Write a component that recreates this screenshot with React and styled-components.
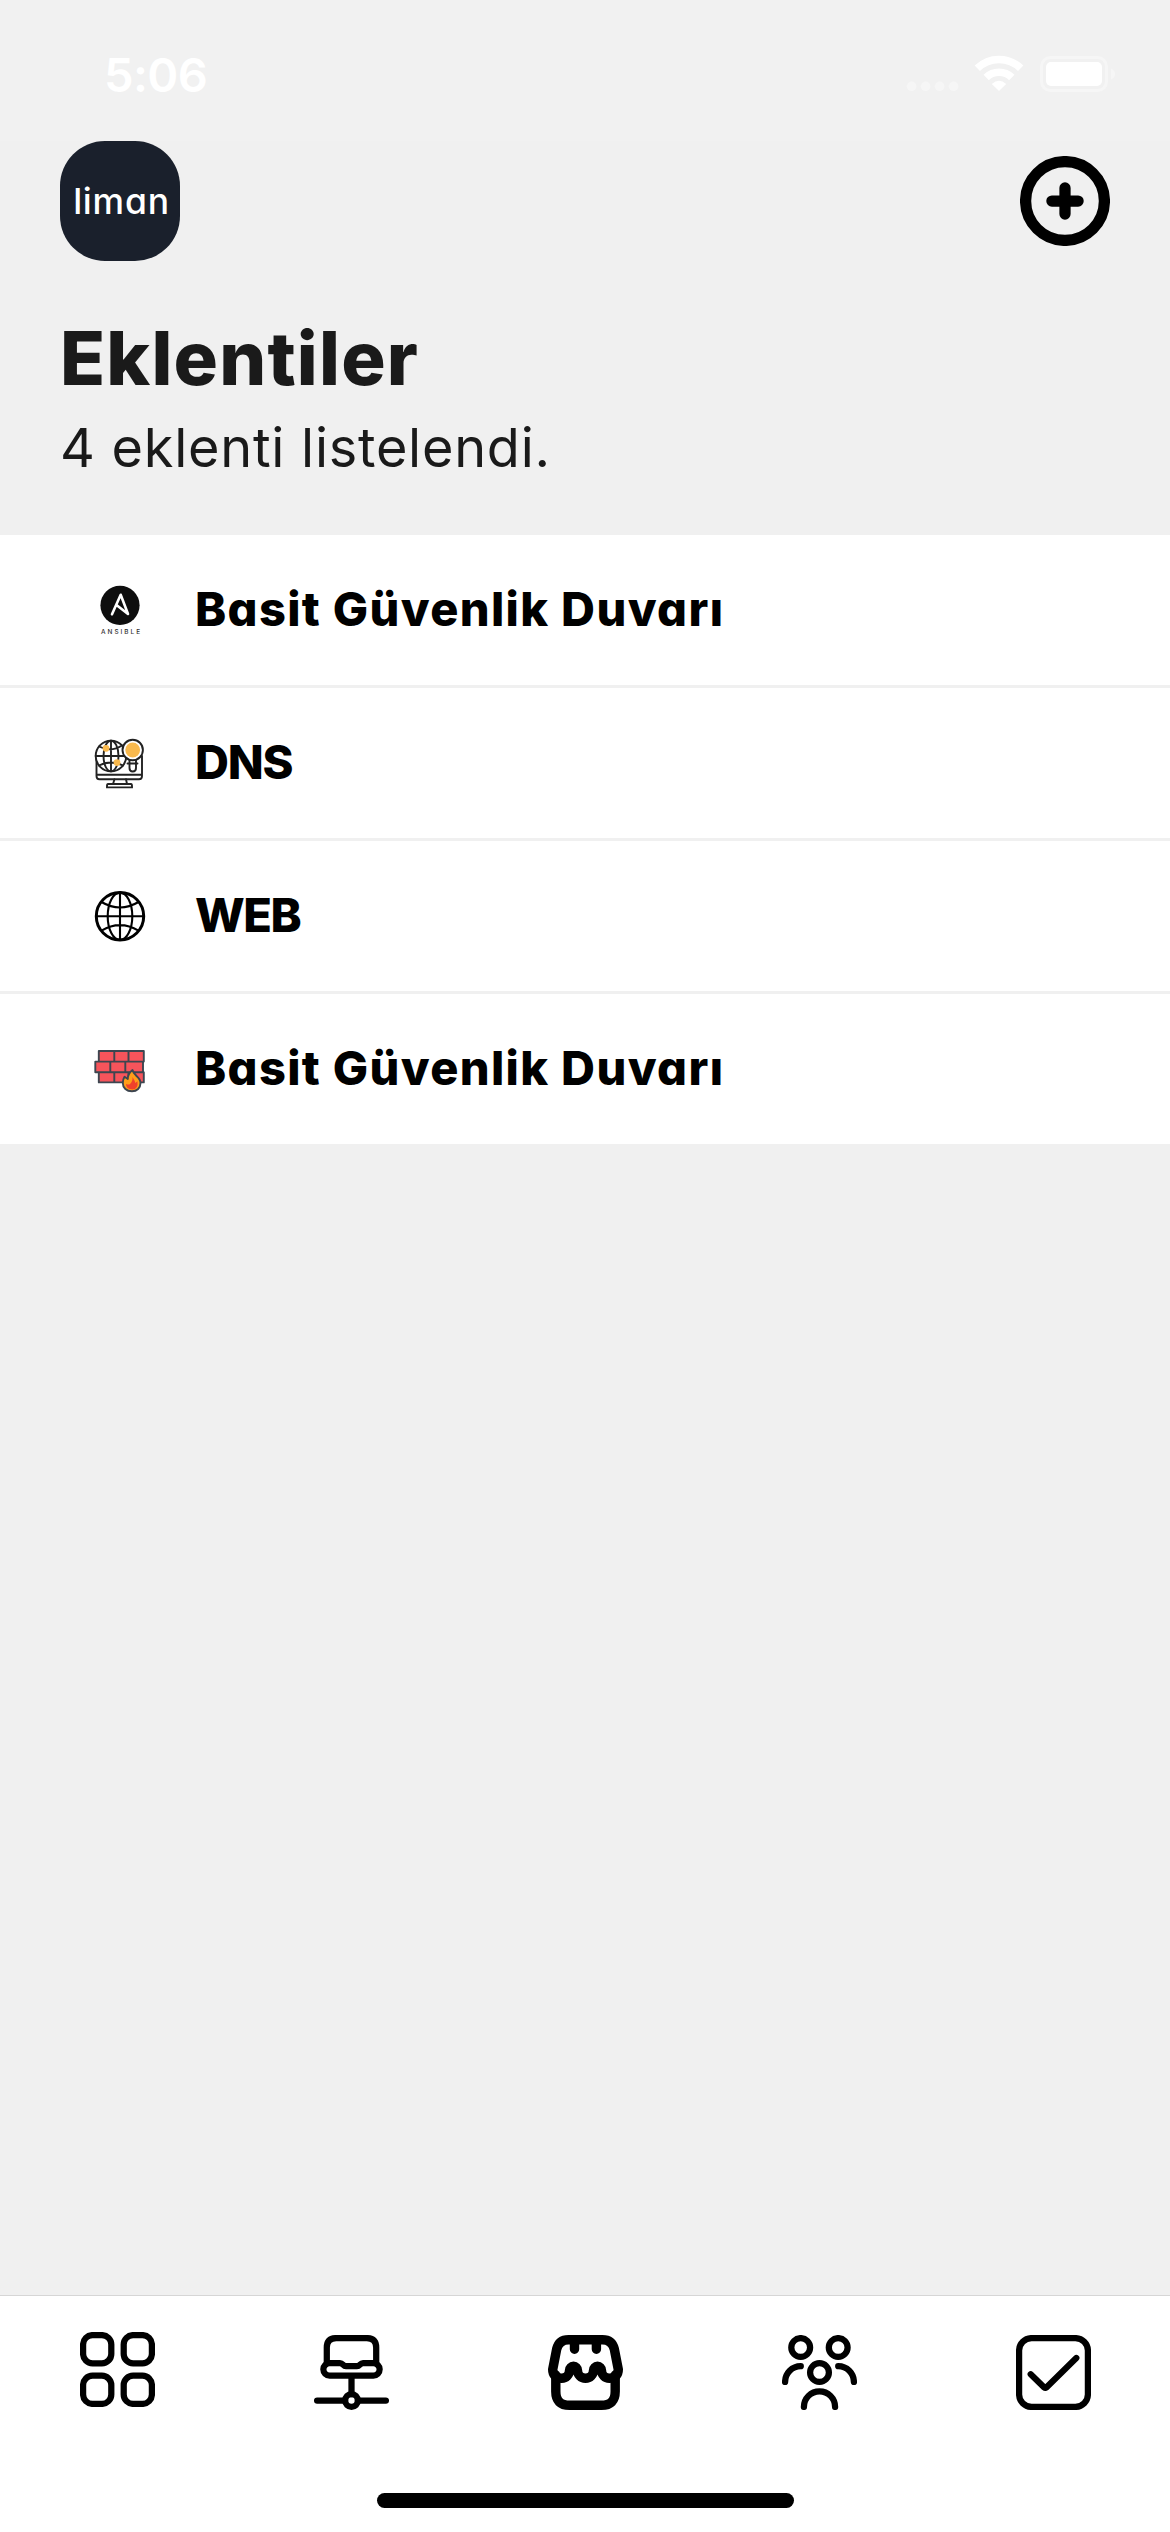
import React from "react";
import styled, { createGlobalStyle } from "styled-components";

const GlobalStyle = createGlobalStyle`
  * { box-sizing: border-box; }
  body { margin: 0; background: #f0f0f0; }
`;

const Screen = styled.div`
  display: flex;
  flex-direction: column;
  width: 1170px;
  height: 2532px;
  background: #f0f0f0;
  font-family: Inter, "Noto Sans", sans-serif;
  font-feature-settings: "cv11", "ss03";
  overflow: hidden;
`;

const StatusBar = styled.div`
  display: flex;
  justify-content: space-between;
  height: 141px;
  flex: none;
  padding: 45px 54px 0 104px;
  background: #f1f1f1;
  color: #fff;
`;

const Clock = styled.div`
  font-size: 47px;
  font-weight: 600;
  line-height: 59px;
  letter-spacing: -0.6px;
`;

const StatusIcons = styled.svg`
  width: 210px;
  height: 60px;
`;

const Header = styled.header`
  height: 394px;
  flex: none;
  padding: 0 60px;
`;

const TopRow = styled.div`
  display: flex;
  align-items: center;
  justify-content: space-between;
  height: 120px;
`;

const Logo = styled.div`
  display: flex;
  align-items: center;
  justify-content: center;
  width: 120px;
  height: 120px;
  padding-left: 3px;
  border-radius: 45px;
  background: #1a202c;
  color: #fff;
  font-size: 35.5px;
  font-weight: 550;
  letter-spacing: 0.8px;
`;

const AddButton = styled.button`
  display: flex;
  width: 90px;
  height: 90px;
  padding: 0;
  border: 0;
  background: none;
`;

const Title = styled.h1`
  margin: 49px 0 0;
  font-size: 74px;
  font-weight: 800;
  line-height: 96px;
  color: #1a1a1a;
  white-space: nowrap;
  letter-spacing: 1.2px;
`;

const Subtitle = styled.p`
  margin: 2px 0 0;
  font-size: 54px;
  font-weight: 400;
  line-height: 80px;
  color: #1a1a1a;
  white-space: nowrap;
  letter-spacing: 0.75px;
`;

const List = styled.ul`
  display: flex;
  flex-direction: column;
  gap: 3px;
  margin: 0;
  padding: 0;
  list-style: none;
`;

const Row = styled.li`
  display: flex;
  align-items: center;
  gap: 50px;
  height: 150px;
  padding: 0 95px;
  background: #fff;
`;

const RowIcon = styled.svg`
  width: 54px;
  height: 54px;
  margin: 0 -2px;
  flex: none;
`;

const RowName = styled.span`
  padding-bottom: 3px;
  font-size: 47px;
  font-weight: 800;
  line-height: 64px;
  color: #000;
  white-space: nowrap;
  letter-spacing: ${(p) => p.$spacing};
`;

const TabBar = styled.nav`
  display: flex;
  flex-direction: column;
  justify-content: space-between;
  align-items: center;
  height: 237px;
  margin-top: auto;
  padding: 39px 0 24px;
  border-top: 1px solid #d6d6d6;
  background: #fff;
`;

const Tabs = styled.div`
  display: flex;
  width: 100%;
`;

const Tab = styled.a`
  display: flex;
  flex: 1;
  justify-content: center;
  margin-top: ${(p) => (p.$raised ? "-3px" : "0")};
`;

const TabIcon = styled.svg`
  width: 75px;
  height: 75px;
  fill: none;
  stroke: #000;
  stroke-width: ${(p) => (p.$active ? 9.4 : 6.25)};
  stroke-linecap: round;
  stroke-linejoin: round;
`;

const HomeIndicator = styled.div`
  width: 417px;
  height: 15px;
  border-radius: 8px;
  background: #000;
`;

const AnsibleIcon = () => (
  <RowIcon viewBox="0 0 54 54">
    <circle cx="27" cy="22.3" r="19.6" fill="#0e0e0e" />
    <path d="M19 31.3 L27.7 11.8 L35 31 L23.8 22.3" fill="none" stroke="#fff" strokeWidth="2.6" strokeLinejoin="round" strokeLinecap="round" />
    <text x="8" y="50.6" textLength="39" fontFamily="Inter, sans-serif" fontSize="6.4" fontWeight="500" fill="#333">ANSIBLE</text>
  </RowIcon>
);

const DnsIcon = () => (
  <RowIcon viewBox="0 0 54 54" fill="none" stroke="#222" strokeWidth="1.9" strokeLinecap="round">
    <path d="M3.5 20 V40 Q3.5 43.3 6.5 43.3 H46 Q49 43.3 49 40 V20 M3.5 38.8 H49" />
    <path d="M21.5 43.3 L20 48 M33 43.3 L34 48 M15 48 H38 Q39 48 39 50 V51.4 H14 V50 Q14 48 15 48 M24 48 H30" />
    <circle cx="18" cy="20" r="15.3" fill="#fff" />
    <ellipse cx="18" cy="20" rx="7.5" ry="15.3" />
    <path d="M18 4.7 V35.3 M2.7 20 H33.3 M6 10.5 Q18 16.5 29 9.5 M6 29.5 Q18 23.5 30 29.5" />
    <g stroke="none" fill="#f9b94d">
      <circle cx="13" cy="12.3" r="3.4" />
      <circle cx="24" cy="26.6" r="3.4" />
    </g>
    <path d="M36.5 23 V32 Q36.5 35.5 39.7 35.5 Q43 35.5 43 32 V23 M34.5 27.5 H44.5" fill="#fff" />
    <circle cx="39.7" cy="14" r="10.2" fill="#fff" />
    <circle cx="39.7" cy="14" r="7.4" fill="#f9b94d" stroke="none" />
  </RowIcon>
);

const WebIcon = () => (
  <RowIcon viewBox="0 0 54 54" fill="none" stroke="#000" strokeWidth="2.1">
    <circle cx="27" cy="27.3" r="23.7" strokeWidth="3" />
    <ellipse cx="27" cy="27.3" rx="12.3" ry="23.7" />
    <path d="M27 3.5 V51 M3 27.3 H51 M8.5 13 Q27 24 45.5 13 M8.5 41.6 Q27 30.6 45.5 41.6" />
  </RowIcon>
);

const FirewallIcon = () => (
  <RowIcon viewBox="0 0 54 54" stroke="#3d4650" strokeWidth="1.9" strokeLinejoin="round">
    <path d="M5.8 9 H50.8 V19.6 H5.8 Z M2.3 19.6 H50 V30.3 H2.3 Z M5.8 30.3 H50.8 V40.4 H5.8 Z" fill="#f7545b" />
    <path d="M21.3 9 V19.6 M35.5 9 V19.6 M17.3 19.6 V30.3 M32.3 19.6 V30.3 M21.3 30.3 V40.4 M35.5 30.3 V40.4" fill="none" />
    <path d="M39.5 28 C40.5 34 47.5 34.5 47.5 41 C47.5 46 44 49.3 39 49.3 C33.5 49.3 29.8 46 29.8 41 Q29.8 37.5 31.5 34.8 L34.8 37 Q34.8 31.5 39.5 28 Z" fill="#ff9e19" />
    <path d="M39.5 35 Q42 39 42.3 41 L44.5 39.2 Q45.5 47.4 39.3 47.4 Q33 47.4 33 42 Q36 43 37 42 Q40 39 39.5 35 Z" fill="#f0422b" stroke="none" />
  </RowIcon>
);

const extensions = [
  { name: "Basit Güvenlik Duvarı", Icon: AnsibleIcon, spacing: "1.35px" },
  { name: "DNS", Icon: DnsIcon, spacing: "-1.2px" },
  { name: "WEB", Icon: WebIcon, spacing: "-1.4px" },
  { name: "Basit Güvenlik Duvarı", Icon: FirewallIcon, spacing: "1.35px" },
];

export default function App() {
  return (
    <>
      <GlobalStyle />
      <Screen>
        <StatusBar>
          <Clock>5:06</Clock>
          <StatusIcons viewBox="906 45 210 60">
            <g fill="#f6f6f6">
              <circle cx="911.6" cy="86.3" r="4.8" />
              <circle cx="925.6" cy="86.3" r="4.8" />
              <circle cx="939.6" cy="86.3" r="4.8" />
              <circle cx="953.6" cy="86.3" r="4.8" />
            </g>
            <g fill="none" stroke="#fff" strokeWidth="7.6">
              <path d="M977.3 68.3 A31 31 0 0 1 1020.7 68.3" />
              <path d="M986.2 77.5 A18.3 18.3 0 0 1 1011.8 77.5" />
            </g>
            <path d="M999 91 L991.8 84 Q999 77.6 1006.2 84 Z" fill="#fff" />
            <rect x="1041.5" y="57.5" width="65" height="33" rx="9" fill="none" stroke="#f6f6f6" strokeWidth="3" />
            <path d="M1111 68.5 Q1115 70 1115 74 Q1115 78 1111 79.5 Z" fill="#f6f6f6" />
            <rect x="1046" y="62" width="56" height="24" rx="5" fill="#fff" />
          </StatusIcons>
        </StatusBar>

        <Header>
          <TopRow>
            <Logo>liman</Logo>
            <AddButton aria-label="Ekle">
              <svg width="90" height="90" viewBox="0 0 90 90" fill="none" stroke="#000" strokeWidth="11.25" strokeLinecap="round">
                <circle cx="45" cy="45" r="39.4" />
                <path d="M45 31.9 V58.1 M31.9 45 H58.1" />
              </svg>
            </AddButton>
          </TopRow>
          <Title>Eklentiler</Title>
          <Subtitle>4 eklenti listelendi.</Subtitle>
        </Header>

        <List>
          {extensions.map(({ name, Icon, spacing }, i) => (
            <Row key={i}>
              <Icon />
              <RowName $spacing={spacing}>{name}</RowName>
            </Row>
          ))}
        </List>

        <TabBar>
          <Tabs>
            <Tab $raised>
              <TabIcon viewBox="0 0 75 75">
                <rect x="3.1" y="3.1" width="28.2" height="28.2" rx="9.4" />
                <rect x="43.7" y="3.1" width="28.2" height="28.2" rx="9.4" />
                <rect x="3.1" y="43.7" width="28.2" height="28.2" rx="9.4" />
                <rect x="43.7" y="43.7" width="28.2" height="28.2" rx="9.4" />
              </TabIcon>
            </Tab>
            <Tab>
              <TabIcon viewBox="0 0 75 75">
                <path d="M12.8 28 V12.5 Q12.8 3.1 22.2 3.1 H52.8 Q62.2 3.1 62.2 12.5 V28" />
                <path d="M15.6 28.1 H26 C29 28.1 29 31.2 32 31.2 H43 C46 31.2 46 28.1 49 28.1 H59.4 A6.25 6.25 0 0 1 59.4 40.6 H15.6 A6.25 6.25 0 0 1 15.6 28.1 Z" />
                <path d="M37.5 41 V59 M3.1 65.5 H31 M44 65.5 H71.9" />
                <circle cx="37.5" cy="65.5" r="6.3" />
              </TabIcon>
            </Tab>
            <Tab>
              <TabIcon $active viewBox="0 0 75 75">
                <path d="M7.8 40 V56.5 Q7.8 70.3 21.5 70.3 H53.5 Q67.2 70.3 67.2 56.5 V40" />
                <path d="M4.7 34.5 L8.7 14 Q11 4.7 20.5 4.7 H54.5 Q64 4.7 66.3 14 L70.3 34.5 C70.3 40 67 43.3 61.4 43.3 A8 8 0 0 1 53.5 35.3 A4 4 0 0 0 45.5 35.3 A8 8 0 0 1 29.5 35.3 A4 4 0 0 0 21.5 35.3 A8 8 0 0 1 13.6 43.3 C8 43.3 4.7 40 4.7 34.5 Z" />
                <path d="M26.5 5 V14.3 M48.4 5 V14.3" />
              </TabIcon>
            </Tab>
            <Tab>
              <TabIcon viewBox="0 0 75 75">
                <circle cx="18.7" cy="12.5" r="9.4" />
                <circle cx="56.2" cy="12.5" r="9.4" />
                <circle cx="37.5" cy="37.5" r="9.4" />
                <path d="M18.8 31.2 A15.7 15.7 0 0 0 3.1 46.9 M56.2 31.2 A15.7 15.7 0 0 1 71.9 46.9 M21.9 71.9 A15.6 15.6 0 0 1 53.1 71.9" />
              </TabIcon>
            </Tab>
            <Tab>
              <TabIcon viewBox="0 0 75 75">
                <rect x="3.1" y="3.1" width="68.8" height="68.8" rx="12.5" />
                <path d="M14.7 39.2 L28 52.3 Q29.3 53.3 30.6 52.3 L60.3 23" />
              </TabIcon>
            </Tab>
          </Tabs>
          <HomeIndicator />
        </TabBar>
      </Screen>
    </>
  );
}
